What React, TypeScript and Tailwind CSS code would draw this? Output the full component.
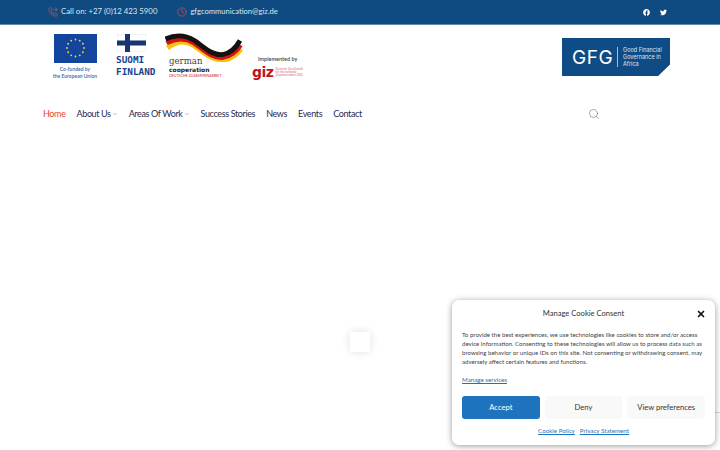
import React from "react";
import { PhoneForwarded, Clock, Search, X, ChevronDown } from "lucide-react";
import { FaFacebook, FaTwitter } from "react-icons/fa";

const star = Array.from({ length: 12 }, (_, i) => {
  const a = (i * Math.PI) / 6;
  return { x: 21.5 + 8.5 * Math.sin(a), y: 14 - 8.5 * Math.cos(a) };
});

function EuLogo() {
  return (
    <div className="flex flex-col items-center w-[50px]">
      <svg width="43" height="29" viewBox="0 0 43 29" className="block">
        <rect width="43" height="29" fill="#13459c" />
        {star.map((s, i) => (
          <circle key={i} cx={s.x} cy={s.y} r="0.9" fill="#e9df4c" />
        ))}
      </svg>
      <span className="mt-[3px] text-[5px] leading-[7px] text-[#2f6aa8] font-semibold text-center whitespace-nowrap">
        Co-funded by
        <br />
        the European Union
      </span>
    </div>
  );
}

function FinlandLogo() {
  return (
    <div className="flex flex-col items-start w-[40px]">
      <svg width="29" height="18" viewBox="0 0 29 18" className="block">
        <rect width="29" height="18" fill="#fff" stroke="#e3e8ef" />
        <rect x="8" width="5" height="18" fill="#17366f" />
        <rect y="6.5" width="29" height="5" fill="#17366f" />
      </svg>
      <span className="mt-[2px] -ml-[1px] text-[9.4px] leading-[12px] font-bold text-[#17448f] whitespace-nowrap font-['DejaVu_Sans_Mono']">
        SUOMI
        <br />
        FINLAND
      </span>
    </div>
  );
}

function GermanLogo() {
  return (
    <div className="flex flex-col w-[78px]">
      <svg width="78" height="29" viewBox="0 0 78 29" fill="none" strokeWidth="4.8" className="block">
        <path d="M2.5 15 C9.5 9.5 18 6 28 12 C38 19 46 27 57 27 C66 26.5 72 21.5 76 16" stroke="#f3c30e" />
        <path d="M1.5 10 C9 6 18 3.5 29 10 C39 17 47 25.5 57.8 24.5 C66 23 72 18 75.5 12" stroke="#d2111b" />
        <path d="M0.5 6 C9 2 18 0.5 29.5 7.5 C39.5 14.5 47.5 23 58 21.5 C66 20 71.5 14 75 7.5" stroke="#16130f" />
      </svg>
      <span className="pl-[4px] -mt-[5px] text-[8.6px] leading-[9px] text-[#444] font-['DejaVu_Serif']">german</span>
      <span className="pl-[4px] text-[6px] leading-[7px] font-bold text-[#222] font-['DejaVu_Sans'] whitespace-nowrap">cooperation</span>
      <span className="pl-[4px] text-[3.6px] leading-[6px] text-[#c8262e] whitespace-nowrap">DEUTSCHE ZUSAMMENARBEIT</span>
    </div>
  );
}

function GizLogo() {
  return (
    <div className="flex flex-col w-[56px]">
      <span className="pl-[6px] text-[5.5px] leading-[8px] font-semibold text-[#444] whitespace-nowrap">Implemented by</span>
      <div className="flex items-center gap-[2px] mt-[3px]">
        <span className="text-[14px] leading-[12px] font-bold text-[#c1121f] font-['DejaVu_Sans'] tracking-[-0.5px]">giz</span>
        <span className="text-[2.8px] leading-[3px] text-[#d9646c] whitespace-nowrap">
          Deutsche Gesellschaft
          <br />
          für Internationale
          <br />
          Zusammenarbeit (GIZ)
        </span>
      </div>
    </div>
  );
}

function GfgLogo() {
  return (
    <div className="w-[108px] h-[38px] bg-[#0f4c85] [clip-path:polygon(0_0,100%_0,100%_70%,89%_100%,0_100%)] flex items-center pl-[10px] text-white">
      <span className="text-[19px] leading-none font-normal tracking-[0.5px] font-['Inter']">GFG</span>
      <span className="w-px h-[20px] bg-[#9fc1dc] ml-[4px] mr-[5px]" />
      <span className="text-[5.5px] leading-[7px] whitespace-nowrap font-['Inter'] text-[#dce8f2]">
        Good Financial
        <br />
        Governance in
        <br />
        Africa
      </span>
    </div>
  );
}

export default function App() {
  return (
    <div className="relative w-[720px] h-[450px] overflow-hidden bg-white font-['Lato',sans-serif]">
      <div className="h-[25px] bg-[#0f4a80] border-b border-[#5f8bb0] flex items-center justify-between pl-[48px] pr-[53px]">
        <div className="flex items-center text-[#dce6ef]">
          <PhoneForwarded size={10} strokeWidth={1.6} className="text-[#e0524a]" />
          <span className="ml-[3px] text-[7.8px]">Call on: +27 (0)12 423 5900</span>
          <Clock size={10} strokeWidth={1.6} className="ml-[20px] text-[#e0524a]" />
          <span className="ml-[3px] text-[7.6px]">gfgcommunication@giz.de</span>
        </div>
        <div className="flex items-center gap-[10px] text-white">
          <FaFacebook size={7} />
          <FaTwitter size={7} />
        </div>
      </div>

      <div className="flex items-start justify-between pl-[50px] pr-[50px] pt-[9px]">
        <div className="flex items-start">
          <EuLogo />
          <div className="ml-[17px]"><FinlandLogo /></div>
          <div className="ml-[8px] -mt-[1px]"><GermanLogo /></div>
          <div className="ml-[9px] mt-[21px]"><GizLogo /></div>
        </div>
        <div className="mt-[4px]"><GfgLogo /></div>
      </div>

      <div className="flex items-center mt-[26px] pl-[43px] h-[16px] text-[9px] tracking-[-0.37px] text-[#1f2a52]">
        <span className="text-[#e0482a]">Home</span>
        <span className="ml-[11px]">About Us</span>
        <ChevronDown size={6} className="ml-[1px] text-[#777]" />
        <span className="ml-[11px]">Areas Of Work</span>
        <ChevronDown size={6} className="ml-[1px] text-[#777]" />
        <span className="ml-[11px]">Success Stories</span>
        <span className="ml-[11px]">News</span>
        <span className="ml-[11px]">Events</span>
        <span className="ml-[11px]">Contact</span>
        <Search size={12} strokeWidth={1} className="ml-[226px] -mt-[1px] text-[#555]" />
      </div>

      <div className="absolute left-[350px] top-[332px] w-[20px] h-[20px] bg-white shadow-[0_0_10px_rgba(0,0,0,0.12)]" />

      <div className="absolute right-0 top-[412px] w-[6px] h-px bg-[#d8d8d8]" />

      <div className="absolute left-[452px] top-[300px] w-[263px] h-[145px] bg-white rounded-[7px] shadow-[0_1px_6px_rgba(0,0,0,0.4)] flex flex-col px-[10px] pt-[8px] text-[#333]">
        <div className="relative h-[11px] flex items-center justify-center text-[7.6px]">
          Manage Cookie Consent
          <X size={10} strokeWidth={4} className="absolute right-[-1px] top-[1px] text-[#111]" />
        </div>
        <p className="mt-[11px] text-[6.12px] leading-[9px] text-[#444]">
          To provide the best experiences, we use technologies like cookies to store and/or access device information. Consenting to these technologies will allow us to process data such as browsing behavior or unique IDs on this site. Not consenting or withdrawing consent, may adversely affect certain features and functions.
        </p>
        <span className="mt-[9px] text-[6.2px] leading-[9px] text-[#1e73be] underline">Manage services</span>
        <div className="mt-[12px] flex gap-[5px] text-[7.6px]">
          <div className="w-[78px] h-[23px] rounded-[3px] bg-[#1e73be] text-white flex items-center justify-center">Accept</div>
          <div className="w-[78px] h-[23px] rounded-[3px] bg-[#f9f9f9] flex items-center justify-center">Deny</div>
          <div className="w-[78px] h-[23px] rounded-[3px] bg-[#f9f9f9] flex items-center justify-center">View preferences</div>
        </div>
        <div className="mt-[7px] flex justify-center gap-[5px] text-[6.2px] leading-[9px] text-[#1e73be] underline">
          <span>Cookie Policy</span>
          <span>Privacy Statement</span>
        </div>
      </div>
    </div>
  );
}
